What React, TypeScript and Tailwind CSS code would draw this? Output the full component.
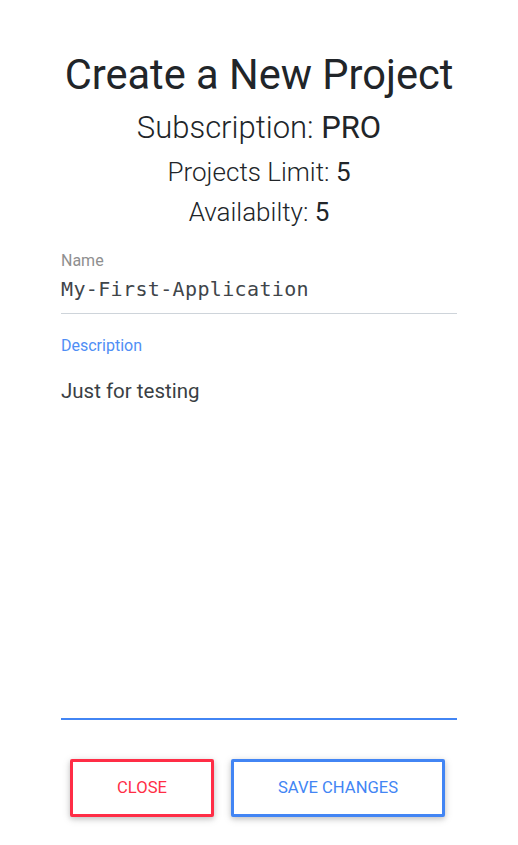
export default function App() {
  return (
    <div className="min-h-[845px] w-full bg-white font-['Roboto',sans-serif] text-[#212529]">
      <div className="flex flex-col items-center pt-[50px]">
        <h1 className="text-[41.6px] leading-[50px] font-normal">Create a New Project</h1>
        <div className="mt-[10px] text-[31px] leading-[36px] font-light">
          Subscription: <span className="font-normal">PRO</span>
        </div>
        <div className="mt-[10px] text-[26px] leading-[32px] font-light">
          Projects Limit: <span className="font-normal">5</span>
        </div>
        <div className="mt-[8px] text-[26px] leading-[32px] font-light">
          Availabilty: <span className="font-normal">5</span>
        </div>
      </div>

      <div className="mx-[61px] mt-[24px]">
        <label className="block text-[16px] leading-[18px] text-[#8f8f8f]">Name</label>
        <input
          type="text"
          defaultValue="My-First-Application"
          className="block w-full border-b border-[#ced4da] pt-[7px] pb-[12px] font-['DejaVu_Sans_Mono',monospace] text-[20px] leading-[24px] tracking-[0.36px] text-[#40454a] outline-none"
        />

        <label className="mt-[23px] block text-[16px] leading-[18px] text-[#4f8ef5]">Description</label>
        <textarea
          defaultValue="Just for testing"
          className="mt-[22px] block h-[343px] w-full resize-none border-b-2 border-[#4285f4] text-[20.5px] leading-[28px] text-[#3a3f44] outline-none"
        />

        <div className="mt-[39px] flex gap-[17px] pl-[9px]">
          <button className="h-[58px] w-[144px] rounded-[2px] border-[3px] border-[#ff2d46] bg-white text-[16.6px] text-[#ff2d46] shadow-[0_2px_5px_rgba(0,0,0,0.16),0_2px_10px_rgba(0,0,0,0.12)]">
            CLOSE
          </button>
          <button className="h-[58px] w-[214px] rounded-[2px] border-[3px] border-[#4285f4] bg-white text-[16.6px] text-[#4285f4] shadow-[0_2px_5px_rgba(0,0,0,0.16),0_2px_10px_rgba(0,0,0,0.12)]">
            SAVE CHANGES
          </button>
        </div>
      </div>
    </div>
  );
}
